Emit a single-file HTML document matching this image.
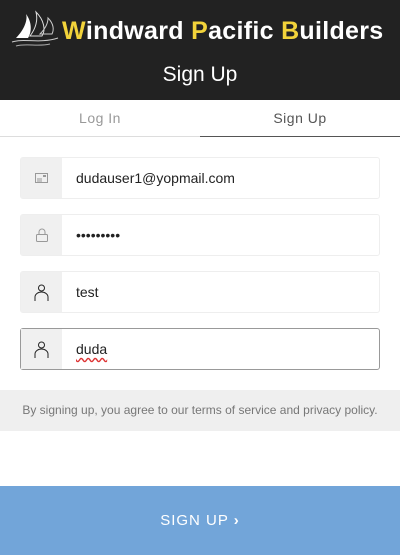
<!DOCTYPE html>
<html><head><style>
*{box-sizing:border-box;margin:0;padding:0}
body{width:400px;height:555px;background:#fff;font-family:"Liberation Sans",Arial,sans-serif;position:relative;overflow:hidden}
.hdr{position:absolute;left:0;top:0;width:400px;height:100px;background:#222}
.logo{position:absolute;left:62px;top:17px;font-size:25px;font-weight:bold;color:#fff;letter-spacing:0.3px;white-space:nowrap}
.logo b{color:#f2d33a}
.title{position:absolute;top:63px;width:100%;text-align:center;color:#fff;font-size:21px}
.tab{position:absolute;top:100px;height:37px;width:200px;text-align:center;line-height:37px;font-size:14px;letter-spacing:.5px}
.in{position:absolute;left:20px;width:360px;height:42px;border:1px solid #eee;border-radius:3px;background:#fff}
.in .ic{position:absolute;left:0;top:0;width:41px;height:40px;background:#f0f0f0}
.in .t{position:absolute;left:55px;top:0;line-height:40px;font-size:14px;color:#222}
.band{position:absolute;top:390px;left:0;width:400px;height:41px;background:#efefef;color:#777;font-size:12px;text-align:center;line-height:41px}
.btn{position:absolute;top:486px;left:0;width:400px;height:69px;background:#72a5d9;color:#fff;text-align:center;line-height:69px;font-size:15px;letter-spacing:1px}
</style></head><body>
<div class="hdr">
<svg style="position:absolute;left:10px;top:10px" width="50" height="38" viewBox="0 0 50 38"><path d="M6 28 C14 20 18 10 16 4 C22 12 22 22 18 28Z" fill="#fff"/><path d="M20 26 C26 18 28 10 26 2 C34 10 36 20 32 26Z" fill="none" stroke="#ddd" stroke-width="1"/><path d="M30 24 C36 18 38 12 38 8 C44 14 44 20 42 24Z" fill="none" stroke="#ccc"/><path d="M2 32 C14 28 30 34 48 28" stroke="#ccc" fill="none"/><path d="M6 36 C16 33 28 37 40 34" stroke="#aaa" fill="none"/></svg>
<div class="logo"><b>W</b>indward <b>P</b>acific <b>B</b>uilders</div>
<div class="title">Sign Up</div>
</div>
<div class="tab" style="left:0;color:#999;border-bottom:1px solid #ddd">Log In</div>
<div class="tab" style="left:200px;color:#555;border-bottom:1px solid #555">Sign Up</div>
<div class="in" style="top:157px"><div class="ic"><svg style="position:absolute;left:14px;top:15px" width="13" height="10"><rect x=".5" y=".5" width="12" height="9" fill="none" stroke="#999"/><rect x="8" y="2" width="3" height="2" fill="#999"/><path d="M2 6h5M2 8h5" stroke="#999"/></svg></div><div class="t">dudauser1@yopmail.com</div></div>
<div class="in" style="top:214px"><div class="ic"><svg style="position:absolute;left:15px;top:13px" width="12" height="14"><path d="M3 6V4a3 3 0 0 1 6 0v2" stroke="#999" fill="none"/><rect x=".5" y="6.5" width="11" height="7" rx="1" fill="none" stroke="#999"/></svg></div><div class="t">•••••••••</div></div>
<div class="in" style="top:271px"><div class="ic"><svg style="position:absolute;left:13px;top:12px" width="15" height="17"><circle cx="7.5" cy="4" r="3" fill="none" stroke="#222"/><path d="M1 17v-4a6.5 5 0 0 1 13 0v4" fill="none" stroke="#222"/></svg></div><div class="t">test</div></div>
<div class="in" style="top:328px;border-color:#999"><div class="ic"><svg style="position:absolute;left:13px;top:12px" width="15" height="17"><circle cx="7.5" cy="4" r="3" fill="none" stroke="#222"/><path d="M1 17v-4a6.5 5 0 0 1 13 0v4" fill="none" stroke="#222"/></svg></div><div class="t" style="text-decoration:underline wavy #d33;text-underline-offset:3px">duda</div></div>
<div class="band">By signing up, you agree to our terms of service and privacy policy.</div>
<div class="btn">SIGN UP <b>›</b></div>
</body></html>
